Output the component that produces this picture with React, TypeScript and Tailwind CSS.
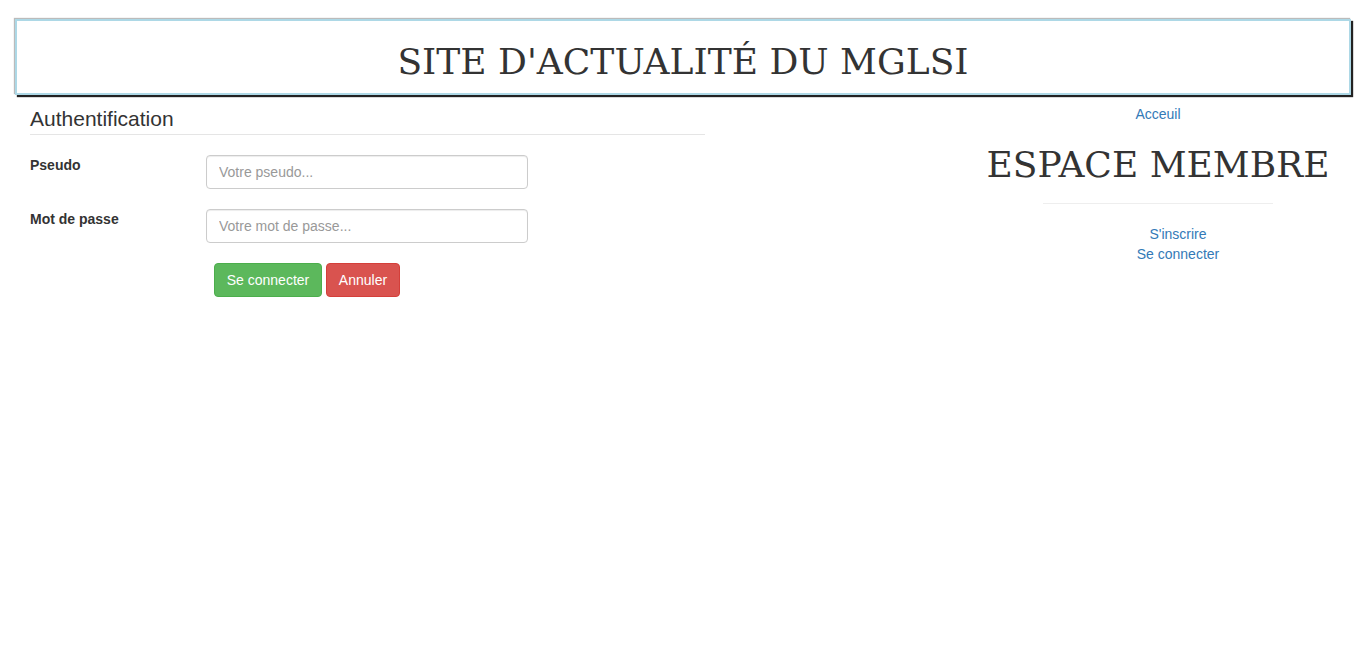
import React from 'react';

// Right-hand member links
const memberLinks = ["S'inscrire", 'Se connecter'];

function Header() {
	return (
		<div className="mx-[15px] mt-[19px] border-2 border-[#add8e6] bg-white shadow-[2px_2px_1px_#222,-1px_-1px_1px_#bbb]">
			<h1 className="h-[72px] flex items-center justify-center text-[36px] text-[#333] font-['DejaVu_Serif',serif] pt-[9px]">
				SITE D'ACTUALITÉ DU MGLSI
			</h1>
		</div>
	);
}

function LoginForm() {
	return (
		<form className="w-[675px] ml-[30px]">
			<legend className="block w-full h-[31px] text-[21px] leading-[30px] text-[#333] border-b border-[#e5e5e5] mb-[20px]">
				Authentification
			</legend>

			<div className="flex mb-[20px]">
				<label className="w-[176px] font-bold text-[14px] leading-[20px] text-[#333]">Pseudo</label>
				<input
					type="text"
					placeholder="Votre pseudo..."
					className="w-[322px] h-[34px] px-[12px] text-[14px] text-[#555] border border-[#ccc] rounded-[4px] shadow-[inset_0_1px_1px_rgba(0,0,0,0.075)] placeholder:text-[#999] outline-none"
				/>
			</div>

			<div className="flex mb-[20px]">
				<label className="w-[176px] font-bold text-[14px] leading-[20px] text-[#333]">Mot de passe</label>
				<input
					type="password"
					placeholder="Votre mot de passe..."
					className="w-[322px] h-[34px] px-[12px] text-[14px] text-[#555] border border-[#ccc] rounded-[4px] shadow-[inset_0_1px_1px_rgba(0,0,0,0.075)] placeholder:text-[#999] outline-none"
				/>
			</div>

			<div className="flex gap-[4px] pl-[184px]">
				<button type="button" className="w-[108px] h-[34px] text-[14px] text-white bg-[#5cb85c] border border-[#4cae4c] rounded-[4px]">
					Se connecter
				</button>
				<button type="button" className="w-[74px] h-[34px] text-[14px] text-white bg-[#d9534f] border border-[#d43f3a] rounded-[4px]">
					Annuler
				</button>
			</div>
		</form>
	);
}

function MemberSpace() {
	return (
		<div className="w-[416px] text-center">
			<a href="#" className="block text-[14px] leading-[20px] text-[#337ab7]">Acceuil</a>
			<h1 className="mt-[21px] text-[36px] leading-[40px] text-[#333] font-['DejaVu_Serif',serif]">ESPACE MEMBRE</h1>
			<hr className="w-[230px] mx-auto mt-[18px] border-t border-[#eee]" />
			<ul className="mt-[20px] pl-[40px]">
				{memberLinks.map((label, index) => (
					<li key={index}>
						<a href="#" className="text-[14px] leading-[20px] text-[#337ab7]">{label}</a>
					</li>
				))}
			</ul>
		</div>
	);
}

export default function App() {
	return (
		<div className="min-h-screen bg-white font-['Liberation_Sans',Arial,sans-serif] text-[14px] leading-[20px] text-[#333]">
			<Header />
			<div className="flex justify-between mt-[9px]">
				<LoginForm />
				<MemberSpace />
			</div>
		</div>
	);
}
